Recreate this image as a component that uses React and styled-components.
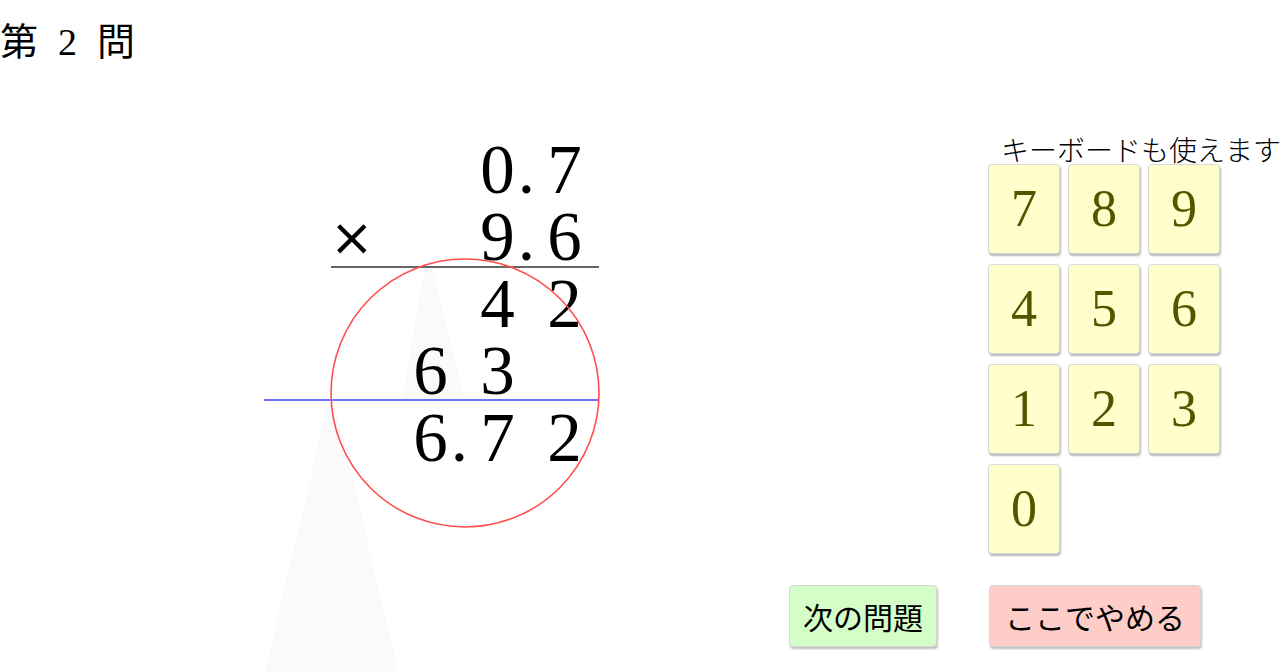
import React from "react";
import styled, { createGlobalStyle } from "styled-components";

const Global = createGlobalStyle`
  html, body { margin: 0; padding: 0; background: #fff; }
  body { font-family: "Liberation Serif", "Noto Sans CJK JP", serif; color: #000; }
  * { box-sizing: border-box; }
`;

const Page = styled.div`
  position: relative;
  width: 1280px;
  height: 671px;
  overflow: hidden;
`;

const Title = styled.h1`
  margin: 0;
  height: 90px;
  padding-top: 23px;
  display: flex;
  gap: 20px;
  font-weight: 400;
  font-size: 38px;
  line-height: 1;
  font-family: "Liberation Serif", "Noto Sans CJK JP", serif;
`;

const Workspace = styled.div`
  display: grid;
  grid-template-columns: 980px 300px;
  height: 464px;
  position: relative;
  z-index: 1;
`;

const Sum = styled.div`
  padding: 47px 0 0 330px;
  display: grid;
  grid-template-columns: repeat(4, 67px);
  grid-auto-rows: 67px;
  align-content: start;
  font-family: "Liberation Serif", serif;
  font-size: 69px;
  line-height: 67px;
`;

const Cell = styled.div`
  grid-column: ${(p) => p.col};
  grid-row: ${(p) => p.row};
  text-align: center;
  white-space: nowrap;
`;

const Times = styled.div`
  grid-column: 1;
  grid-row: 2;
  font-family: "DejaVu Sans", sans-serif;
  font-size: 52px;
  line-height: 67px;
`;

const Dot = styled.span`
  display: inline-block;
  width: 0;
  text-indent: 3px;
  overflow: visible;
`;

const Side = styled.div`
  padding-top: 47px;
  display: flex;
  flex-direction: column;
`;

const Hint = styled.div`
  padding-left: 21px;
  height: 27px;
  font-size: 28px;
  line-height: 25px;
  white-space: nowrap;
  font-family: "Noto Sans CJK JP", sans-serif;
  font-weight: 300;
`;

const Keys = styled.div`
  margin-left: 8px;
  display: grid;
  grid-template-columns: repeat(3, 72px);
  grid-auto-rows: 90px;
  column-gap: 8px;
  row-gap: 10px;
`;

const Key = styled.button`
  margin: 0;
  padding: 0;
  background: #ffffcc;
  border: 1px solid #d8d8d8;
  border-radius: 4px;
  box-shadow: 1px 2px 2px rgba(0, 0, 0, 0.28);
  color: #555500;
  font-family: "Liberation Serif", serif;
  font-size: 52px;
  line-height: 1;
  cursor: pointer;
`;

const Footer = styled.div`
  margin-top: 31px;
  padding-left: 789px;
  display: flex;
  gap: 52px;
  position: relative;
  z-index: 1;
`;

const Action = styled.button`
  margin: 0;
  height: 62px;
  width: ${(p) => p.w}px;
  padding: 0;
  background: ${(p) => (p.tone === "go" ? "#d4fdc8" : "#ffcdc8")};
  border: 1px solid #d6d6d6;
  border-radius: 4px;
  box-shadow: 1px 2px 2px rgba(0, 0, 0, 0.25);
  font-family: "Noto Sans CJK JP", sans-serif;
  font-size: 30px;
  line-height: 1;
  color: #000;
  cursor: pointer;
`;

const Overlay = styled.svg`
  position: absolute;
  left: 0;
  top: 0;
  width: 1280px;
  height: 671px;
  pointer-events: none;
  z-index: 2;
`;

const Shade = styled.svg`
  position: absolute;
  left: 0;
  top: 0;
  width: 1280px;
  height: 671px;
  pointer-events: none;
  z-index: 0;
`;

const rows = [
  [[3, 1, "0", true], [4, 1, "7"]],
  [[3, 2, "9", true], [4, 2, "6"]],
  [[3, 3, "4"], [4, 3, "2"]],
  [[2, 4, "6"], [3, 4, "3"]],
  [[2, 5, "6", true], [3, 5, "7"], [4, 5, "2"]],
];

export default function App() {
  return (
    <>
      <Global />
      <Page>
        <Shade viewBox="0 0 1280 671">
          <path d="M425 264 L432 264 L464 400 L402 400 Z" fill="#fafafa" />
          <path d="M329 400 L334 400 L398 671 L265 671 Z" fill="#fafafa" />
        </Shade>
        <Title>
          <span>第</span>
          <span>2</span>
          <span>問</span>
        </Title>
        <Workspace>
          <Sum>
            <Times>×</Times>
            {rows.flat().map(([col, row, d, dot]) => (
              <Cell key={`${col}-${row}`} col={col} row={row}>
                {d}
                {dot && <Dot>.</Dot>}
              </Cell>
            ))}
          </Sum>
          <Side>
            <Hint>キーボードも使えます</Hint>
            <Keys>
              {["7", "8", "9", "4", "5", "6", "1", "2", "3", "0"].map((k) => (
                <Key key={k}>{k}</Key>
              ))}
            </Keys>
          </Side>
        </Workspace>
        <Footer>
          <Action tone="go" w={148}>次の問題</Action>
          <Action tone="stop" w={212}>ここでやめる</Action>
        </Footer>
        <Overlay viewBox="0 0 1280 671">
          <line x1="331" y1="267" x2="599" y2="267" stroke="#666" strokeWidth="2" />
          <line x1="264" y1="400" x2="599" y2="400" stroke="#7070ff" strokeWidth="2" />
          <circle cx="465" cy="393" r="134" fill="none" stroke="#ff4d4d" strokeWidth="1.6" />
        </Overlay>
      </Page>
    </>
  );
}
